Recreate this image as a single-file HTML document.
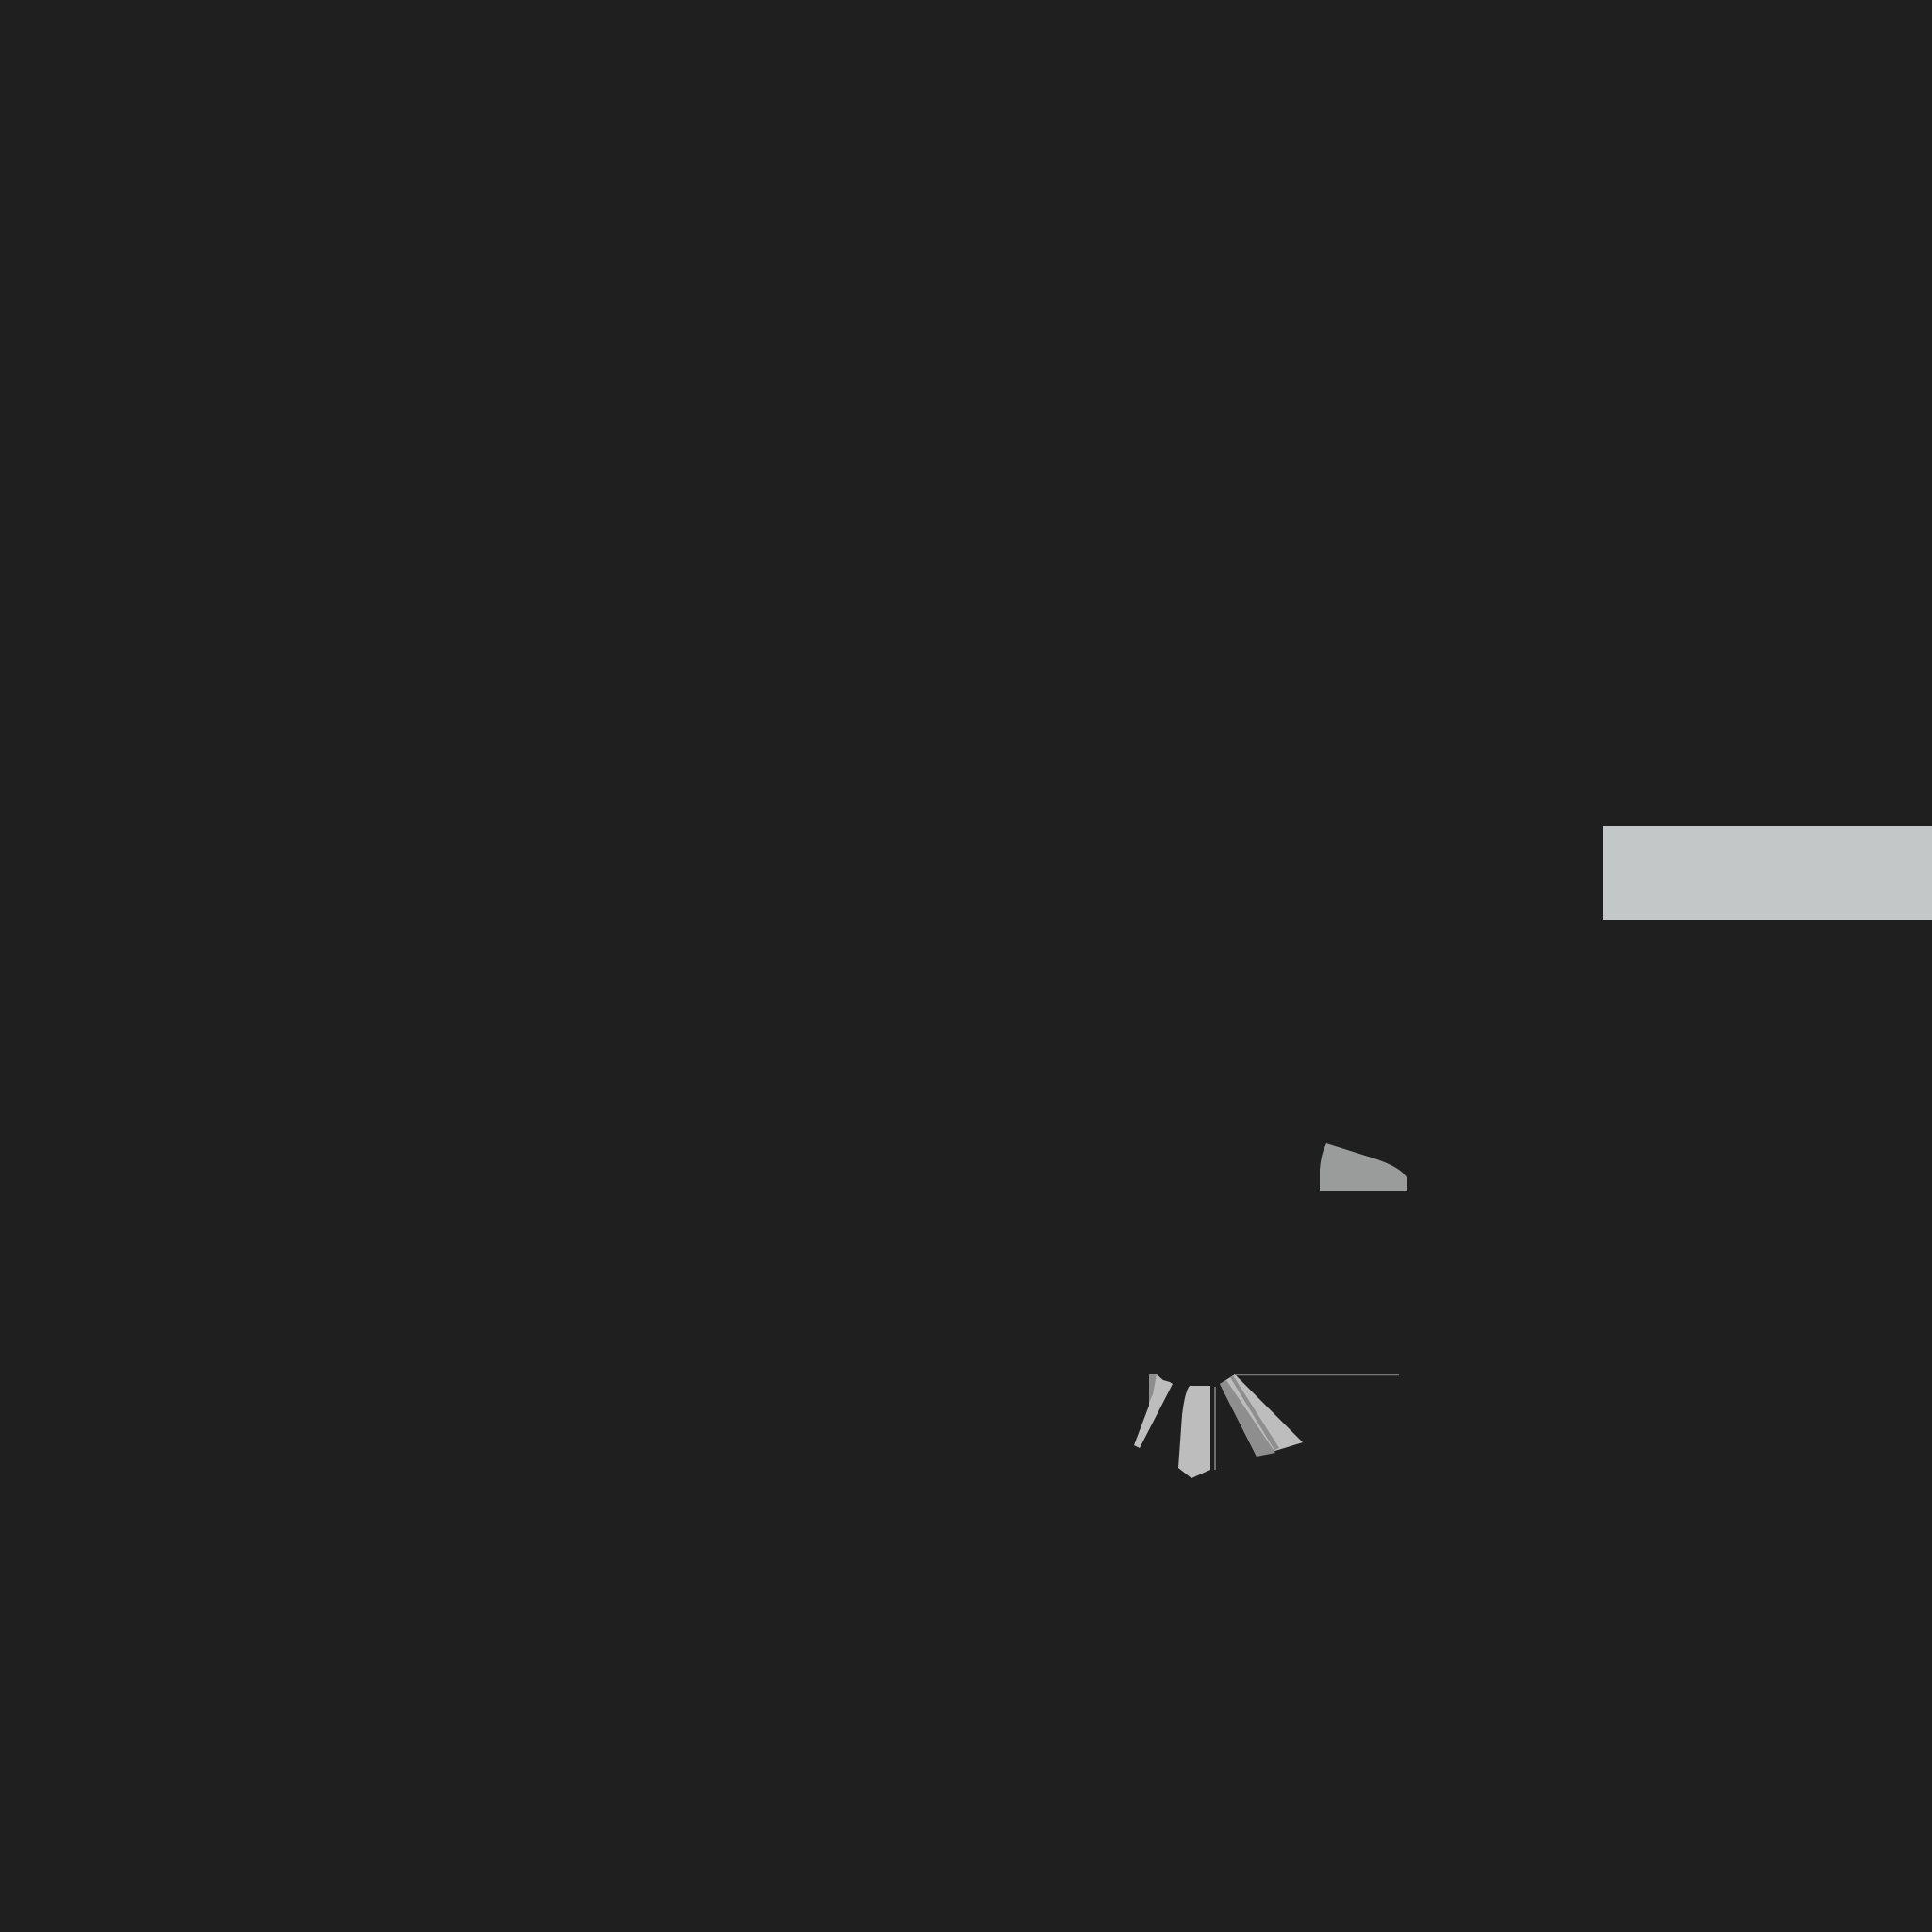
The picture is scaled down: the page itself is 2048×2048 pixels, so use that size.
<!DOCTYPE html>
<html><head><style>html,body{margin:0;padding:0;background:#1f1f1f;width:2048px;height:2048px;overflow:hidden}</style></head>
<body>
<svg width="2048" height="2048" viewBox="0 0 2048 2048" style="position:absolute;left:0;top:0">
<rect x="1699" y="876" width="349" height="99" fill="#c3c7c7"/>
<path d="M1399 1262 L1399 1240 Q1400 1224 1406 1212 L1460 1229 Q1485 1238 1491 1248 L1491 1262 Z" fill="#9a9c9b"/>
<line x1="1310" y1="1457.5" x2="1483" y2="1457.5" stroke="#777" stroke-width="1.5"/>
<polygon points="1218,1457 1226,1457 1233,1463 1240,1465 1243,1467 1208,1535 1202,1532 1218,1490" fill="#bdbdbd"/>
<polygon points="1218,1457 1226,1457 1222,1478 1218,1487" fill="#8e8e8e"/>
<path d="M1261 1469 L1283 1469 L1283 1558 L1263 1567 L1249 1556 L1253 1500 Q1256 1475 1261 1469 Z" fill="#bdbdbd"/>
<line x1="1288" y1="1470" x2="1288" y2="1558" stroke="#888" stroke-width="1.5"/>
<polygon points="1293,1467 1309,1457 1381,1529 1332,1544" fill="#bdbdbd"/>
<polygon points="1293,1467 1300,1463 1352,1540 1332,1544" fill="#8e8e8e"/>
<polygon points="1304,1460 1307,1458 1356,1535 1351,1537" fill="#8e8e8e"/>
</svg>
</body></html>
